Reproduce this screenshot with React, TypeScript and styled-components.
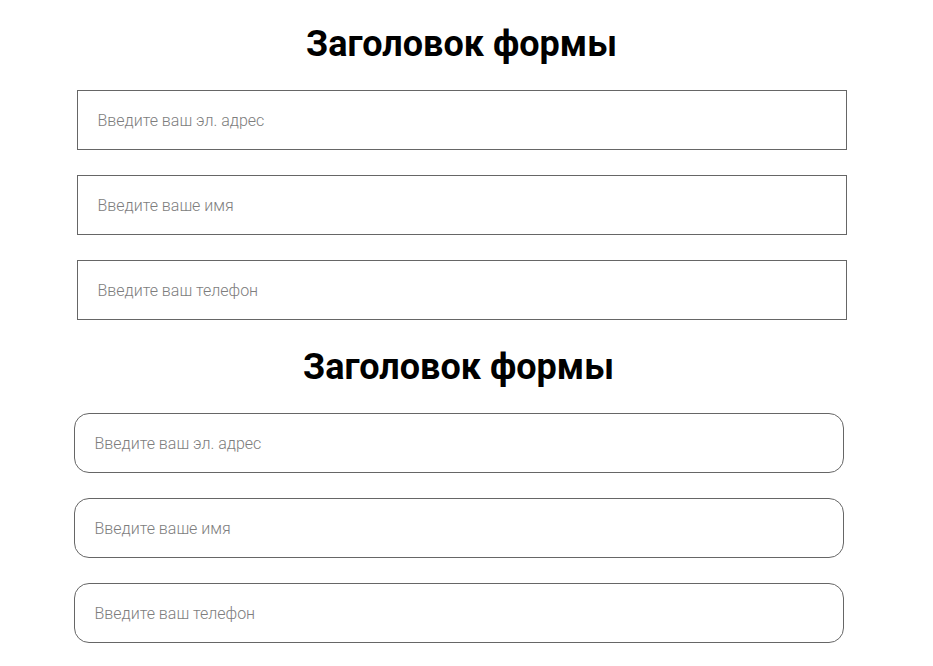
import React from "react";
import styled, { createGlobalStyle, css } from "styled-components";

const Global = createGlobalStyle`
  html, body {
    margin: 0;
    padding: 0;
    background: #ffffff;
    font-family: Roboto, "Noto Sans", Arial, sans-serif;
  }
  * { box-sizing: border-box; }
`;

const Page = styled.div`
  display: flex;
  flex-direction: column;
  align-items: center;
  padding: 22px 10px 0 0;
`;

const Form = styled.form<{ $rounded?: boolean }>`
  width: 776px;
  display: flex;
  flex-direction: column;
  align-items: center;
  ${(p) =>
    p.$rounded &&
    css`
      padding-right: 6px;
    `}
`;

const Title = styled.h2`
  margin: 0 0 24px;
  font-family: Roboto, Arial, sans-serif;
  font-weight: 700;
  font-size: 36px;
  line-height: 44px;
  color: #000;
  text-align: center;
`;

const Field = styled.input<{ $rounded?: boolean }>`
  display: block;
  width: 770px;
  height: 60px;
  margin: 0 0 25px;
  padding: 0 20px;
  border: 1px solid #666666;
  border-radius: ${(p) => (p.$rounded ? "15px" : "0")};
  background: #fff;
  font-family: Roboto, Arial, sans-serif;
  font-weight: 300;
  font-size: 16px;
  color: #333;
  outline: none;

  &::placeholder {
    color: #7d7d7d;
    opacity: 1;
  }
`;

const fields = [
  { type: "email", placeholder: "Введите ваш эл. адрес" },
  { type: "text", placeholder: "Введите ваше имя" },
  { type: "tel", placeholder: "Введите ваш телефон" },
];

function ContactForm({ rounded }: { rounded?: boolean }) {
  return (
    <Form $rounded={rounded} onSubmit={(e) => e.preventDefault()}>
      <Title>Заголовок формы</Title>
      {fields.map((f) => (
        <Field key={f.placeholder} $rounded={rounded} type={f.type} placeholder={f.placeholder} />
      ))}
    </Form>
  );
}

export default function App() {
  return (
    <>
      <Global />
      <Page>
        <ContactForm />
        <ContactForm rounded />
      </Page>
    </>
  );
}
